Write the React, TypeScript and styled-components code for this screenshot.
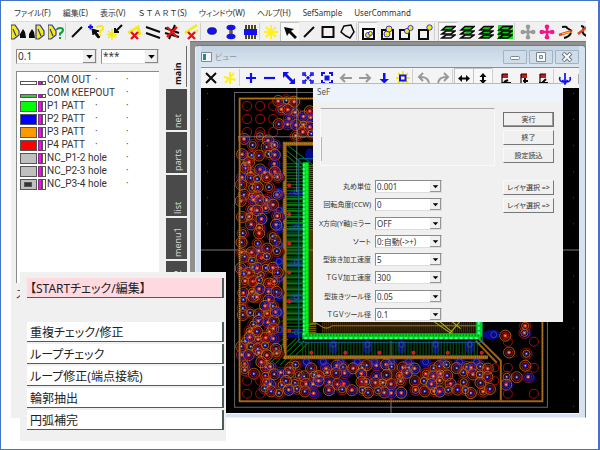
import React from "react";
import styled, { createGlobalStyle, css } from "styled-components";

const UI_FONT = `"Noto Sans", "Noto Sans CJK JP", sans-serif`;

const GlobalStyle = createGlobalStyle`
  * { box-sizing: border-box; }
  body { margin: 0; background: #fff; font-family: ${UI_FONT}; color: #333; }
  button, select { font: inherit; color: inherit; margin: 0; }
`;

const Page = styled.div`
  position: relative;
  min-height: 100vh;
  padding: 2px 12px 0 10px;
  border: 1px solid #4472c4;
  border-right-width: 2px;
  overflow: hidden;
  font-feature-settings: "palt";
`;

const AppWindow = styled.div`
  display: flex;
  flex-direction: column;
`;

const MenuBar = styled.nav`
  display: flex;
  height: 18px;
  padding-left: 3px;
  align-items: center;
  gap: 12px;
  font-size: 8px;
  line-height: 14px;
  color: #333;
`;

const MenuButton = styled.button<{ $fullWidth?: boolean }>`
  border: 0;
  padding: 2px 0 0;
  background: none;
  white-space: nowrap;
  font-feature-settings: ${(p) => (p.$fullWidth ? "normal" : "inherit")};
`;

const ToolBar = styled.div<{ $inner?: boolean }>`
  display: flex;
  align-items: center;
  height: 20px;
  overflow: hidden;
  background: ${(p) => (p.$inner ? "#f4f4f4" : "#f0f0f0")};
  border-top: 1px solid ${(p) => (p.$inner ? "#8a8f96" : "#dcdcdc")};
`;

const ToolButton = styled.button<{ $on?: boolean; $first?: boolean }>`
  display: flex;
  flex: none;
  align-items: center;
  justify-content: center;
  width: ${(p) => (p.$first ? 16 : 19)}px;
  height: 19px;
  padding: 0;
  border: 0;
  overflow: hidden;
  background: none;
  ${(p) =>
    p.$on &&
    css`
      background: #f8f8f8;
      box-shadow: inset 1px 1px 0 #c4c4c4;
    `}
  svg { flex: none; }
`;

const Divider = styled.span<{ $wide?: boolean }>`
  flex: none;
  width: ${(p) => (p.$wide ? 4 : 2)}px;
  height: 17px;
  border-left: 1px solid #cfcfcf;
`;

const Workspace = styled.div`
  display: flex;
  align-items: stretch;
`;

const SidePanel = styled.aside`
  display: flex;
  flex: none;
  width: 179px;
  padding: 5px 3px 0 5px;
  background: #f0f0f0;
`;

const LayerColumn = styled.div`
  display: flex;
  flex-direction: column;
  width: 143px;
`;

const FilterRow = styled.div`
  display: grid;
  grid-template-columns: 81px 58px;
  gap: 4px;
  padding-top: 3px;
`;

const SelectBox = styled.span<{ $small?: boolean }>`
  position: relative;
  display: block;
  height: ${(p) => (p.$small ? 13 : 15)}px;
  border: 1px solid #8b8b8b;
  border-right-color: #ddd;
  border-bottom-color: #ddd;
  background: #fff;
  font-size: ${(p) => (p.$small ? 8 : 10)}px;
  select {
    display: block;
    width: 100%;
    height: 100%;
    padding: 0 12px 0 1px;
    border: 0;
    background: none;
    appearance: none;
    line-height: ${(p) => (p.$small ? 11 : 13)}px;
  }
  svg {
    position: absolute;
    top: 0;
    right: 0;
    pointer-events: none;
  }
`;

const LayerList = styled.ul`
  flex: none;
  height: 212px;
  margin: 7px 0 0;
  padding: 1px 0 0 3px;
  list-style: none;
  background: #fff;
  border-left: 1px solid #8b8b8b;
  border-top: 1px solid #8b8b8b;
`;

const LayerRow = styled.li`
  display: grid;
  grid-template-columns: 27px 48px 31px 1fr;
  align-items: center;
  height: 13px;
  font-family: Roboto, "Noto Sans CJK JP", sans-serif;
  font-size: 10px;
  line-height: 13px;
  white-space: nowrap;
`;

const StatusText = styled.p`
  margin: 4px 0 0;
  font-size: 10px;
  line-height: 14px;
`;

const TabStrip = styled.div`
  display: flex;
  flex-direction: column;
  gap: 2px;
  width: 21px;
  height: 370px;
  margin-left: 7px;
`;

const SideTab = styled.button<{ $active?: boolean }>`
  display: flex;
  flex: none;
  align-items: center;
  justify-content: flex-start;
  width: 21px;
  height: 41px;
  padding: 2px 2px 2px 0;
  border: 0;
  border-left: 1px solid ${(p) => (p.$active ? "#6b6b6b" : "#4a4a4a")};
  writing-mode: vertical-rl;
  transform: rotate(180deg);
  text-align: left;
  font-size: 9px;
  line-height: 19px;
  background: ${(p) => (p.$active ? "#f0f0f0" : "#4a4a4a")};
  color: ${(p) => (p.$active ? "#111" : "#d8d8d8")};
  font-weight: ${(p) => (p.$active ? 700 : 400)};
`;

const MdiArea = styled.main`
  flex: 1;
  min-width: 0;
  padding: 3px 0 0 5px;
  background: #909090;
  border-top: 1px solid #7a7a7a;
`;

const ViewWindow = styled.section`
  padding: 0 6px 3px 5px;
  background: #d5e3f1;
  border: 1px solid #e8f0f7;
  border-right: 1px solid #777;
  border-top-color: #6f7a84;
  border-radius: 4px 4px 0 0;
`;

const ViewTitle = styled.header`
  display: flex;
  align-items: center;
  height: 21px;
  gap: 3px;
  font-size: 8px;
  color: #8b96a2;
  background: linear-gradient(#c3d2e1, #dce7f2);
`;

const WindowButtons = styled.div`
  display: flex;
  gap: 2px;
  margin-left: auto;
`;

const WindowButton = styled.button`
  display: flex;
  align-items: center;
  justify-content: center;
  width: 24px;
  height: 14px;
  padding: 0;
  border: 1px solid #a3b2c1;
  border-radius: 1px;
  background: #cfdce9;
`;

const Canvas = styled.div`
  border-top: 1px solid #f4f4f4;
  border-bottom: 1px solid #f4f4f4;
  background: #000;
  svg { display: block; width: 100%; height: auto; }
`;

const Dialog = styled.section`
  position: absolute;
  top: 82px;
  left: 312px;
  width: 250px;
  height: 239px;
  overflow: hidden;
  background: #f0f0f0;
  border-top: 1px solid #b3bac2;
  font-size: 7px;
`;

const DialogTitle = styled.h2`
  height: 18px;
  margin: 0;
  padding: 2px 4px;
  background: #edf3fb;
  font-size: 8px;
  font-weight: 400;
  line-height: 12px;
  color: #555;
`;

const DialogBody = styled.div`
  display: grid;
  grid-template-columns: 175px 51px;
  gap: 8px;
  padding: 6px 8px 0 7px;
`;

const MessageBox = styled.div`
  height: 58px;
  border: 1px solid #f9f9f9;
  border-top-color: #aaa;
  position: relative;
  &::before {
    content: "";
    position: absolute;
    left: 0;
    bottom: 4px;
    height: 24px;
    border-left: 1px solid #b5b5b5;
  }
`;

const FieldList = styled.div`
  display: flex;
  flex-direction: column;
  justify-content: space-between;
  height: 141px;
  margin-top: 14px;
`;

const Field = styled.div`
  display: grid;
  grid-template-columns: 51px 67px;
  gap: 4px;
  height: 13px;
  line-height: 14px;
  label {
    display: flex;
    justify-content: flex-end;
    white-space: nowrap;
  }
`;

const ButtonColumn = styled.div`
  display: flex;
  flex-direction: column;
  gap: 3px;
  padding-top: 4px;
`;

const PushButton = styled.button<{ $default?: boolean; $spaced?: boolean }>`
  height: 15px;
  margin-top: ${(p) => (p.$spaced ? 14 : 0)}px;
  padding: 0;
  border: 1px solid #f9f9f9;
  border-right-color: #777;
  border-bottom-color: #777;
  background: #f0f0f0;
  line-height: 12px;
  white-space: nowrap;
  ${(p) =>
    p.$default &&
    css`
      border: 1px solid #707070;
      box-shadow: inset -1px -1px 0 #999;
    `}
`;

const CommandPalette = styled.section`
  position: absolute;
  top: 271px;
  left: 19px;
  display: flex;
  flex-direction: column;
  gap: 2px;
  width: 206px;
  padding: 6px 2px 11px 7px;
  background: #f0f0f0;
`;

const CommandButton = styled.button<{ $heading?: boolean }>`
  height: 20px;
  margin-bottom: ${(p) => (p.$heading ? 22 : 0)}px;
  padding: 2px 0 0 3px;
  border: 0;
  border-right: 2px solid #4c5c5c;
  border-bottom: 1px solid #4c5c5c;
  background: ${(p) => (p.$heading ? "#ffd9e0" : "#fff")};
  color: #222;
  font-size: 12px;
  line-height: 17px;
  text-align: left;
  white-space: nowrap;
`;

/* ---------- icons ---------- */

const K = "#0a0a0a";
const B = "#1010f0";
const Y = "#f5e916";

const wedge = (x: number) => (
  <path d={`M${x} 1h4l4 6v4l-5 4h-3z M${x + 2} 5l3 7`} fill={Y} stroke="#303a9a" strokeWidth="1.2" />
);
const peak = (x: number) => <path d={`M${x} 14V10l3-5 2 3 1 6z`} fill={K} />;
const sheets = (c: string) => (
  <g fill={c} stroke={K} strokeWidth="1.6">
    <path d="M2 14l4-3h9l-4 3z" />
    <path d="M2 10l4-3h9l-4 3z" />
    <path d="M2 6l4-3.500h9l-4 3.500z" fill="#12c912" />
  </g>
);
const cross = (c: string) => (
  <>
    <path d="M8 2v12M2 8h12" stroke={c} strokeWidth="2.500" />
    <g fill={c}>
      <circle cx="8" cy="2.800" r="2.300" /><circle cx="8" cy="13.200" r="2.300" />
      <circle cx="2.800" cy="8" r="2.300" /><circle cx="13.200" cy="8" r="2.300" />
    </g>
  </>
);
const redX = <path d="M5 8l7 7M12 8l-7 7" stroke="#e51212" strokeWidth="2.400" />;
const flag = (d: string) => (
  <>
    <path d="M4 4h6v4H4z" fill="#e01010" />
    <path d="M4 4v9M4 4h6" stroke={K} strokeWidth="1.200" />
    <path d={d} stroke={K} strokeWidth="2" fill="none" />
  </>
);

const ICONS: Record<string, React.ReactNode> = {
  wedgePeak: <>{wedge(0)}{peak(9)}</>,
  peakWedge: <>{peak(0)}{wedge(7)}</>,
  wedgeHelp: (
    <>
      {wedge(0)}
      <path d="M9 6q0-2 3-2t3 2q0 2-3 3.500v2M12 13v2" stroke="#129c3c" strokeWidth="2" fill="none" />
    </>
  ),
  line: <path d="M3 13L13 3" stroke={K} strokeWidth="2" />,
  query: (
    <>
      <path d="M0 3h5M2.500 0.500v5" stroke={B} strokeWidth="2" />
      <path d="M4 5l7 2-3 1 4 5-2 1-4-5-1 2z" fill={K} stroke={K} />
      <path d="M9 4q0-2 3-2t3 2q0 2-3 3v2M12 10v2" stroke={Y} strokeWidth="2" fill="none" />
    </>
  ),
  sparkTick: (
    <>
      <path d="M5 5v11M0 10.500h10M1 7l8 7M9 7l-8 7" stroke={Y} strokeWidth="1.600" />
      <path d="M15 1L8 8M8 4v4h4" stroke={K} strokeWidth="2" fill="none" />
    </>
  ),
  triDelete: <><path d="M2 9l10-6 2 8" stroke={Y} strokeWidth="3" fill="none" />{redX}</>,
  parallel: <path d="M1 3l14 5M1 9l14 5" stroke={K} strokeWidth="2" />,
  crossDelete: (
    <>
      <path d="M1 4l14 5M1 9l14 4M5 15L11 1" stroke={K} strokeWidth="2" />
      <path d="M3 3l10 10M13 3L3 13" stroke="#e51212" strokeWidth="2.400" />
    </>
  ),
  lineDelete: <><path d="M2 9L14 1" stroke={Y} strokeWidth="2.500" /><path d="M9 11l6-5" stroke={Y} strokeWidth="2" />{redX}</>,
  dot: <ellipse cx="8" cy="7" rx="4.600" ry="3.400" fill={B} stroke="#223" strokeWidth=".6" />,
  dumbbell: (
    <>
      <path d="M8 3v10" stroke="#6d6418" strokeWidth="3.500" />
      <ellipse cx="8" cy="3.500" rx="4.500" ry="2.800" fill={B} />
      <ellipse cx="8" cy="12.500" rx="4.500" ry="2.800" fill={B} />
    </>
  ),
  chip: (
    <>
      <path d="M4 1v14M7 1v14M10 1v14M13 1v14" stroke="#4d4618" strokeWidth="2" />
      <path d="M2 5h13v6H2z" fill={B} />
    </>
  ),
  spark: <path d="M8 1v14M1 8h14M3 3l10 10M13 3L3 13" stroke="#fff01a" strokeWidth="1.800" />,
  pointer: <path d="M2 3l10 2-3 2 6 6-2 2-6-6-2 3z" fill={K} />,
  square: <path d="M2.500 3h11v10h-11z" stroke={K} strokeWidth="2" fill="none" />,
  pentagon: <path d="M5 2l7-1 3 7-4 6-4-2-5-4z" stroke={K} strokeWidth="1.500" fill="none" />,
  boxIn: (
    <>
      <path d="M3 5h11v10H3z" stroke={K} strokeWidth="2" fill="none" />
      <circle cx="8" cy="11" r="2.500" fill={Y} stroke={B} strokeWidth=".8" /><circle cx="10.500" cy="9.500" r="2" fill={Y} stroke={B} strokeWidth=".8" />
    </>
  ),
  boxTwo: (
    <>
      <path d="M3 6h11v9H3z" stroke={K} strokeWidth="2" fill="none" />
      <circle cx="8" cy="10" r="3" fill={Y} stroke={B} strokeWidth=".8" /><circle cx="10" cy="5" r="3" fill={Y} stroke={B} strokeWidth=".8" />
    </>
  ),
  boxEdge: (
    <>
      <path d="M2 6h9v9H2z" stroke={K} strokeWidth="2" fill="none" />
      <circle cx="9" cy="7" r="2.600" fill={Y} stroke={B} strokeWidth=".8" /><circle cx="12.500" cy="4" r="2.600" fill={Y} stroke={B} strokeWidth=".8" />
    </>
  ),
  boxOut: (
    <>
      <path d="M2 6h9v9H2z" stroke={K} strokeWidth="2" fill="none" />
      <circle cx="12.500" cy="3.500" r="2.700" fill={Y} stroke={B} strokeWidth=".8" />
    </>
  ),
  sheets1: sheets("#f0f0f0"),
  sheets2: <>{sheets("#d8f0d8")}<path d="M5 9.500l2-1.500h5l-2 1.500z" fill="#12c912" /></>,
  sheets3: sheets("#12c912"),
  sheets4: <><path d="M1 1h15v14H1z" fill="#12e312" />{sheets("#12c912")}</>,
  crossGray: cross("#9a9a9a"),
  crossPink: cross("#f5148c"),
  swap: (
    <>
      <path d="M4 3q5-1 5 1l5 3M6 14q5-1 7-5" stroke={K} strokeWidth="2" fill="none" />
      <path d="M1 11L14 7" stroke="#e8401a" strokeWidth="2.500" /><path d="M4 10l8-2" stroke={Y} />
    </>
  ),
  swapGreen: (
    <>
      <path d="M4 2q4 0 2 4t6 7" stroke={K} strokeWidth="2" fill="none" />
      <path d="M1 10L10 3" stroke="#e8401a" strokeWidth="2.500" />
      <path d="M10 6h5M12 9l4 4" stroke="#14c814" strokeWidth="2" />
    </>
  ),
  close: <path d="M3 3l10 10M13 3L3 13" stroke={K} strokeWidth="2" />,
  star: <path d="M8 2v12M2 7l12 3M3 13l9-10" stroke="#fff01a" strokeWidth="2" />,
  plus: <path d="M8 3v10M3 8h10" stroke={B} strokeWidth="2.200" />,
  minus: <path d="M2 8h11" stroke={B} strokeWidth="2.200" />,
  diagonal: <path d="M2 2h6L6 4l6 6 2-2v6H8l2-2-6-6-2 2z" fill={B} />,
  shrink: (
    <>
      <path d="M3 6V3h3M10 3h3v3M13 10v3h-3M6 13H3v-3" stroke={B} strokeWidth="1.500" fill="none" />
      <path d="M4 4l8 8M12 4l-8 8" stroke={B} strokeWidth="2" strokeDasharray="3 1" />
    </>
  ),
  fit: (
    <>
      <path d="M3 6V3h3M10 3h3v3M13 10v3h-3M6 13H3v-3" stroke={B} strokeWidth="2" fill="none" />
      <path d="M5.500 5.500h5v5h-5z" fill={B} />
    </>
  ),
  left: <path d="M14 8H3M7 4L3 8l4 4" stroke="#999" strokeWidth="2" fill="none" />,
  right: <path d="M2 8h11M9 4l4 4-4 4" stroke="#999" strokeWidth="2" fill="none" />,
  down: <path d="M7 3h2.500v6H13l-4.700 4.500L3.500 9H7z" fill={B} />,
  sparkBox: (
    <>
      <path d="M8 1v14M1 8h14M3 3l10 10M13 3L3 13" stroke={Y} strokeWidth="2" />
      <path d="M5 5.500h5.500v5H5z" fill="#fff" stroke={B} strokeWidth="2" />
    </>
  ),
  undo: <path d="M7 3L3 7l4 4M3 7q10-1 10 8" stroke="#999" strokeWidth="2" fill="none" />,
  redo: <path d="M9 3l4 4-4 4M13 7Q3 6 3 15" stroke="#999" strokeWidth="2" fill="none" />,
  horizontal: <path d="M2 8.500l4-3.500v2.500h4V5l4 3.500-4 3.500V9.500H6V12z" fill={K} />,
  vertical: <path d="M8 3l3.500 4H9v3h2.500L8 14l-3.500-4H7V7H4.500z" fill={K} />,
  flag1: flag("M6 12l4-2M4 13h9"),
  flag2: flag("M8 8v6M6 11h5"),
  flag3: flag("M10 9l-4 4M3 13h9"),
  rotate: <path d="M8 3v12M3 7q-2 5 5 5 7 0 5-5M5.500 10l2.500 4 2.500-4" stroke={B} strokeWidth="1.700" fill="none" />,
  edge: <path d="M3 4v10" stroke="#aaa" strokeWidth="2" />,
};

const Icon = ({ name }: { name: string }) => (
  <svg width="16" height="16" viewBox="0 0 16 16" fill="none" aria-hidden="true">
    {ICONS[name]}
  </svg>
);

const MAIN_TOOLS = [
  "wedgePeak", "peakWedge", "wedgeHelp", "|",
  "line", "query", "sparkTick", "triDelete", "parallel", "crossDelete", "lineDelete", "|",
  "dot", "dumbbell", "chip", "|",
  "spark", "pointer*", "line", "square", "pentagon", "|",
  "boxIn*", "boxTwo", "boxEdge", "boxOut", "||",
  "sheets1*", "sheets2", "sheets3", "sheets4", "||",
  "crossGray", "crossPink", "swap", "swapGreen",
];

const VIEW_TOOLS = [
  "close", "star", "|",
  "plus", "minus", "diagonal", "shrink", "fit", "left", "right", "down", "sparkBox", "|",
  "undo", "redo", "|", "horizontal*", "vertical*", "||",
  "flag1", "flag2", "flag3", "|", "rotate", "edge",
];

const Tools = ({ items, clipFirst }: { items: string[]; clipFirst?: boolean }) => (
  <>
    {items.map((item, i) => {
      if (item[0] === "|") return <Divider key={i} $wide={item === "||"} />;
      const name = item.replace("*", "");
      return (
        <ToolButton key={i} aria-label={name} $on={item.endsWith("*")} $first={clipFirst && i === 0}>
          <Icon name={name} />
        </ToolButton>
      );
    })}
  </>
);

const Dropdown = ({ id, value, small, label }: { id: string; value: string; small?: boolean; label?: string }) => {
  const size = small ? 11 : 13;
  return (
    <SelectBox $small={small}>
      <select id={id} aria-label={label} defaultValue={value}>
        <option>{value}</option>
      </select>
      <svg width={size} height={size} viewBox="0 0 12 12" aria-hidden="true">
        <path d="M0 0h12v12H0z" fill="#f0f0f0" />
        <path d="M11.500 0v11.500H0" stroke="#888" fill="none" />
        <path d="M3 4.500h6l-3 3.500z" fill="#000" />
      </svg>
    </SelectBox>
  );
};

/* ---------- layers ---------- */

type Layer = { name: string; color: string; thin?: boolean; side: string; hole?: boolean; dots: [boolean, boolean] };

const LAYERS: Layer[] = [
  { name: "COM OUT", color: "#fff", thin: true, side: "#ffffc0", dots: [true, true] },
  { name: "COM KEEPOUT", color: "#46c046", thin: true, side: "#ffffc0", dots: [false, true] },
  { name: "P1 PATT", color: "#00ff00", side: "#fff", dots: [true, true] },
  { name: "P2 PATT", color: "#0000ff", side: "#fff", dots: [true, true] },
  { name: "P3 PATT", color: "#ff9900", side: "#fff", dots: [true, true] },
  { name: "P4 PATT", color: "#ff0000", side: "#fff", dots: [true, true] },
  { name: "NC_P1-2 hole", color: "#c0c0c0", side: "#ffffc0", dots: [false, true] },
  { name: "NC_P2-3 hole", color: "#c0c0c0", side: "#ffffc0", dots: [false, true] },
  { name: "NC_P3-4 hole", color: "#c0c0c0", side: "#ffffc0", hole: true, dots: [false, true] },
];

const Swatch = ({ layer }: { layer: Layer }) => (
  <svg width="26" height="12" viewBox="0 0 26 12" aria-hidden="true" stroke="#555">
    {layer.thin ? (
      <>
        <rect x=".5" y="7.500" width="16" height="3" fill={layer.color} />
        <rect x="18.500" y="7.500" width="3" height="3" fill="#e010e0" stroke="#803080" />
        <rect x="22.500" y="7.500" width="3" height="3" fill={layer.side} />
      </>
    ) : (
      <>
        <rect x=".5" y="1.500" width="16" height="10" fill={layer.color} />
        {layer.hole && <rect x="4.500" y="4.500" width="7" height="4" fill="#333" />}
        <rect x="18.500" y="1.500" width="3" height="10" fill="#f010f0" stroke="#803080" />
        <rect x="22.500" y="1.500" width="3" height="10" fill={layer.side} />
      </>
    )}
  </svg>
);

/* ---------- board drawing ---------- */

const seeded = (seed: number) => () => {
  seed = (seed * 16807) % 2147483647;
  return seed / 2147483647;
};

const scatter = () => {
  const rnd = seeded(4711);
  const out: { x: number; y: number; k: number }[] = [];
  const fill = (x0: number, y0: number, x1: number, y1: number, step: number, keep: number) => {
    for (let y = y0; y <= y1; y += step)
      for (let x = x0; x <= x1; x += step)
        if (rnd() < keep) out.push({ x: x + (rnd() - 0.5) * 5, y: y + (rnd() - 0.5) * 5, k: rnd() });
  };
  fill(243, 138, 276, 358, 8, 0.84);
  fill(279, 102, 318, 134, 8, 0.85);
  fill(264, 366, 492, 397, 8, 0.86);
  fill(243, 362, 262, 376, 9, 0.7);
  fill(506, 324, 534, 392, 10, 0.55);
  return out;
};
const VIAS = scatter();
const RINGS = ["#b8680e", "#a81212", "#c87812", "#c01818"];

const range = (from: number, to: number, step: number) =>
  Array.from({ length: Math.floor((to - from) / step) + 1 }, (_, i) => from + i * step);

const rows = (x0: number, x1: number, ys: number[]) => ys.map((y) => `M${x0} ${y}H${x1}`).join("");
const cols = (y0: number, y1: number, xs: number[]) => xs.map((x) => `M${x} ${y0}V${y1}`).join("");

const Board = () => (
  <svg viewBox="201 88 377 324" fill="none" role="img" aria-label="board layout">
    <path d="M234.500 92.500H546.500V406.500H234.500z" stroke="#666" />
    <path d="M201 249.500H578M390.500 340V412" stroke="#777" />
    <g fill="#1d5a50">
      {range(93, 406, 26).map((y) => (
        <React.Fragment key={y}>
          <rect x="207" y={y} width="1" height="1" />
          <rect x="572" y={y} width="1" height="1" />
        </React.Fragment>
      ))}
    </g>

    <g fill="#08088a">
      {range(192, 332, 35).map((y) => (
        <path key={y} d={`M286 ${y + 5}q4-9 10-9t8 4-6 5z`} />
      ))}
      {range(333, 480, 34).map((x) => (
        <ellipse key={x} cx={x} cy="346" rx="5" ry="7" />
      ))}
      <ellipse cx="491" cy="334" rx="8" ry="5" />
      <ellipse cx="309" cy="155" rx="4" ry="7" />
      {range(176, 345, 17).map((y) => (
        <circle key={y} cx="279" cy={y} r="6" />
      ))}
      {range(306, 490, 17).map((x) => (
        <circle key={x} cx={x} cy="361" r="6" />
      ))}
    </g>

    <path d={rows(283, 303, range(163, 333, 3).map((y) => y + 0.5))} stroke="#0a7412" />
    <path d={rows(286, 303, range(198, 318, 6).map((y) => y + 0.5))} stroke="#16a51c" />
    <path d={cols(341, 357, range(302, 478, 3).map((x) => x + 0.5))} stroke="#0a5c12" />
    <path d="M286 150l20 17M286 155l20 17M287 145l26 20M268 364l28-26M274 364l26-26M280 364l24-24M262 364l26-26M286 364l22-22M266 330l20-12M266 350l20-14" stroke="#0b7214" />
    <path d={rows(308, 316, range(165, 332, 2).map((y) => y + 0.5))} stroke="#957612" />
    <path d={cols(320, 332, range(322, 476, 2).map((x) => x + 0.5))} stroke="#7b4c10" opacity=".8" />
    <path d="M308 325q6-5 12 0t12 0h145" stroke="#8a8410" />
    <path d="M432 320l20 14M438 320l14 12M460 320l-12 14M450 320l10 8" stroke="#b4b21a" />

    <path d="M284.500 358V143.500H330M284 356.500H487" stroke="#8a5a10" strokeWidth="4" />
    <path d="M284.500 358V143.500H330M284 356.500H487" stroke="#c88a24" strokeDasharray="1 1" strokeWidth="2" />
    <path d="M478 338l22 22V400M475 340l21 22" stroke="#a0620a" strokeWidth="2" />
    <path d="M298.500 341.500V158.500H330M298 341.500H481.500V320" stroke="#0a6e90" />
    <path d="M305.500 162V336M302 335.500H480M478.500 336V320" stroke="#04d41c" strokeWidth="6" />
    <path d="M303.500 164V336" stroke="#3affa8" strokeWidth="2" strokeDasharray="2 2" />
    <path d="M306.500 163V333" stroke="#08ff14" strokeWidth="2" strokeDasharray="3 1" />
    <path d="M304 337.500H478M478 334V320" stroke="#3affa8" strokeWidth="2" strokeDasharray="3 2" />
    <path d="M306 334.500H478" stroke="#046d0a" strokeWidth="2" strokeDasharray="1 2" />

    {VIAS.map((v, i) => (
      <ellipse key={i} cx={v.x + 2} cy={v.y + 1} rx="6" ry="5" fill={v.k > 0.55 ? "#06067c" : "#240810"} opacity=".7" />
    ))}
    {VIAS.map((v, i) => (
      <g key={i}>
        <circle cx={v.x} cy={v.y} r="5.500" stroke={RINGS[i % 4]} strokeWidth=".8" />
        <circle cx={v.x} cy={v.y} r="3.600" stroke={v.k > 0.75 ? "#2c2cd0" : RINGS[(i + 1) % 4]} strokeWidth=".8" />
        <circle cx={v.x} cy={v.y} r="2.100" fill={v.k > 0.35 ? "#c8301c" : "#1c1c98"} />
        <circle cx={v.x} cy={v.y} r=".9" fill="#b8b8b8" />
      </g>
    ))}

    <g stroke="#9a0c0c">
      {[106, 119, 132].map((y) => [247, 260, 273].map((x) => <circle key={`${x}-${y}`} cx={x} cy={y} r="4.500" />))}
      {[380, 393].map((y) => [247, 260].map((x) => <circle key={`${x}-${y}`} cx={x} cy={y} r="4.500" />))}
      {[341, 367, 393].map((y) => [507, 533].map((x) => <circle key={`${x}-${y}`} cx={x} cy={y} r="4.500" />))}
      {[367, 380].map((y) => <circle key={y} cx="494" cy={y} r="4" />)}
    </g>
    <g stroke="#4a4ab0" strokeWidth=".8">
      {range(176, 345, 17).map((y) => <circle key={y} cx="279" cy={y} r="3" />)}
      {range(306, 490, 17).map((x) => <circle key={x} cx={x} cy="361" r="3" />)}
      {range(333, 480, 34).map((x) => <circle key={x} cx={x} cy="344" r="2.500" />)}
      {range(192, 332, 35).map((y) => <circle key={y} cx="296" cy={y} r="2" />)}
      <circle cx="493" cy="334" r="3" />
    </g>
    <g fill="#c82020">
      {range(185, 330, 29).map((y) => <circle key={y} cx="289" cy={y} r="2" />)}
      {range(311, 490, 34).map((x) => <circle key={x} cx={x} cy="352" r="2" />)}
    </g>

    <path d="M239.500 98.500H541.500V400.500H239.500z" stroke="#8a540a" strokeWidth="2" />
    <path d="M239.500 98.500H541.500V400.500H239.500z" stroke="#d89020" strokeDasharray="1 1" />
    <path d="M296.500 88V192M238 136.500H330" stroke="#999" opacity=".7" />
  </svg>
);

/* ---------- dialog ---------- */

const FIELDS = [
  ["丸め単位", "0.001"],
  ["回転角度(CCW)", "0"],
  ["X方向(Y軸)ミラー", "OFF"],
  ["ソート", "0:自動(->+)"],
  ["型抜き加工速度", "5"],
  ["ＴＧＶ加工速度", "300"],
  ["型抜きツール径", "0.05"],
  ["ＴＧＶツール径", "0.1"],
];

const MENUS = ["ファイル(F)", "編集(E)", "表示(V)", "ＳＴＡＲＴ(S)", "ウィンドウ(W)", "ヘルプ(H)", "SefSample", "UserCommand"];
const COMMANDS = ["重複チェック/修正", "ループチェック", "ループ修正(端点接続)", "輪郭抽出", "円弧補完"];

export default function App() {
  return (
    <Page>
      <GlobalStyle />
      <AppWindow>
        <MenuBar>
          {MENUS.map((m) => (
            <MenuButton key={m} $fullWidth={m.startsWith("Ｓ")}>{m}</MenuButton>
          ))}
        </MenuBar>
        <ToolBar>
          <Tools items={MAIN_TOOLS} clipFirst />
        </ToolBar>
        <Workspace>
          <SidePanel>
            <LayerColumn>
              <FilterRow>
                <Dropdown id="width" label="width" value="0.1" />
                <Dropdown id="filter" label="filter" value="***" />
              </FilterRow>
              <LayerList>
                {LAYERS.map((l) => (
                  <LayerRow key={l.name}>
                    <Swatch layer={l} />
                    <span>{l.name}</span>
                    <span>{l.dots[0] ? "·" : ""}</span>
                    <span>{l.dots[1] ? "·" : ""}</span>
                  </LayerRow>
                ))}
              </LayerList>
              <StatusText>ス</StatusText>
            </LayerColumn>
            <TabStrip>
              {["main", "net", "parts", "list", "menu1", "menu2"].map((t, i) => (
                <SideTab key={t} $active={i === 0}>{t}</SideTab>
              ))}
            </TabStrip>
          </SidePanel>
          <MdiArea>
            <ViewWindow>
              <ViewTitle>
                <svg width="11" height="10" viewBox="0 0 11 10" aria-hidden="true">
                  <path d="M.5.500h10v9H.5z" fill="#f4f8fa" stroke="#7c8c98" />
                  <path d="M2 2h3v6H2z" fill="#2c8c84" />
                </svg>
                <span>ビュー</span>
                <WindowButtons>
                  <WindowButton aria-label="minimize">
                    <svg width="12" height="10" viewBox="0 0 12 10"><rect x="1.500" y="4.500" width="9" height="3" rx="1" fill="#fff" stroke="#7b8794" /></svg>
                  </WindowButton>
                  <WindowButton aria-label="maximize">
                    <svg width="12" height="10" viewBox="0 0 12 10"><path d="M1.500.500h9v9h-9z" fill="#fff" stroke="#7b8794" /><path d="M4.500 3.500h3v3h-3z" fill="#cfdce9" stroke="#7b8794" /></svg>
                  </WindowButton>
                  <WindowButton aria-label="close">
                    <svg width="12" height="10" viewBox="0 0 12 10"><path d="M2 1l8 8M10 1L2 9" stroke="#6b7784" strokeWidth="4" /><path d="M2.500 1.500l7 7M9.500 1.500l-7 7" stroke="#fff" strokeWidth="2" /></svg>
                  </WindowButton>
                </WindowButtons>
              </ViewTitle>
              <ToolBar $inner>
                <Tools items={VIEW_TOOLS} />
              </ToolBar>
              <Canvas>
                <Board />
              </Canvas>
            </ViewWindow>
          </MdiArea>
        </Workspace>
      </AppWindow>

      <Dialog role="dialog" aria-label="SeF">
        <DialogTitle>SeF</DialogTitle>
        <DialogBody>
          <div>
            <MessageBox />
            <FieldList>
              {FIELDS.map(([label, value], i) => (
                <Field key={label}>
                  <label htmlFor={`field-${i}`}>{label}</label>
                  <Dropdown id={`field-${i}`} value={value} small />
                </Field>
              ))}
            </FieldList>
          </div>
          <ButtonColumn>
            <PushButton $default>実行</PushButton>
            <PushButton>終了</PushButton>
            <PushButton>設定読込</PushButton>
            <PushButton $spaced>{"レイヤ選択 =>"}</PushButton>
            <PushButton>{"レイヤ選択 =>"}</PushButton>
          </ButtonColumn>
        </DialogBody>
      </Dialog>

      <CommandPalette aria-label="START">
        <CommandButton $heading>【STARTチェック/編集】</CommandButton>
        {COMMANDS.map((c) => (
          <CommandButton key={c}>{c}</CommandButton>
        ))}
      </CommandPalette>
    </Page>
  );
}
